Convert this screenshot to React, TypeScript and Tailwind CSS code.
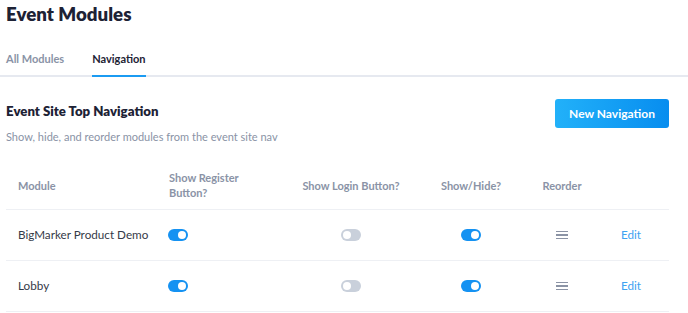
import { useState } from "react";

// Toggle switch
function Toggle({ on }: { on: boolean }) {
  return (
    <span
      className={`relative inline-flex h-3 w-5 items-center rounded-full ${
        on ? "bg-[#1592f2]" : "bg-[#c9d0db]"
      }`}
    >
      <span
        className={`absolute h-2 w-2 rounded-full bg-white ${
          on ? "right-0.5" : "left-0.5"
        }`}
      />
    </span>
  );
}

// Drag handle
function Handle() {
  return (
    <span className="flex w-3 flex-col gap-[2px]">
      <span className="h-[1.5px] bg-[#8b93a5]" />
      <span className="h-[1.5px] bg-[#8b93a5]" />
      <span className="h-[1.5px] bg-[#8b93a5]" />
    </span>
  );
}

const rows = [
  { name: "BigMarker Product Demo", register: true, login: false, show: true },
  { name: "Lobby", register: true, login: false, show: true },
];

const cols = "grid grid-cols-[151px_134px_120px_120px_62px_76px]";

export default function App() {
  const [tab] = useState("Navigation");

  return (
    <div className="h-[313px] w-[688px] overflow-hidden bg-white font-['Lato',sans-serif]">
      {/* Title */}
      <h1 className="pl-1.5 pt-px text-[18.7px] font-extrabold leading-[26px] text-[#1d2235]">
        Event Modules
      </h1>

      {/* Tabs */}
      <div className="mt-[24px] flex gap-7 border-b-2 border-[#e6e9f0] pl-1.5">
        {["All Modules", "Navigation"].map((t) => (
          <div
            key={t}
            className={`-mb-[2px] pb-[8px] text-[11px] font-bold leading-4 ${
              tab === t
                ? "border-b-2 border-[#1b9bf2] text-[#1d2235]"
                : "border-b-2 border-transparent text-[#8a93a6]"
            }`}
          >
            {t}
          </div>
        ))}
      </div>

      {/* Section header */}
      <div className="mt-[22px] flex items-start justify-between pl-1.5 pr-[19px]">
        <div>
          <h2 className="pt-[2px] text-[13.2px] font-extrabold leading-5 text-[#1d2235]">
            Event Site Top Navigation
          </h2>
          <p className="mt-[8px] text-[11px] leading-4 text-[#8a93a6]">
            Show, hide, and reorder modules from the event site nav
          </p>
        </div>
        <button className="h-[29px] w-[114px] rounded-[3px] bg-gradient-to-r from-[#22b1f9] to-[#078def] text-[12px] font-bold text-white">
          New Navigation
        </button>
      </div>

      {/* Table */}
      <div className="ml-1.5 mt-[16px] w-[663px]">
        <div
          className={`${cols} h-[49px] items-center border-b border-[#eef0f4] text-[11px] font-bold leading-[15px] text-[#8a93a6]`}
        >
          <div className="pl-3">Module</div>
          <div className="max-w-[90px] pl-3">Show Register Button?</div>
          <div className="text-center">Show Login Button?</div>
          <div className="text-center">Show/Hide?</div>
          <div className="text-center">Reorder</div>
          <div />
        </div>
        {rows.map((r) => (
          <div
            key={r.name}
            className={`${cols} h-[51px] items-center border-b border-[#eef0f4] text-[11.7px] text-[#353a48]`}
          >
            <div className="pl-3">{r.name}</div>
            <div className="flex pl-[11px]">
              <Toggle on={r.register} />
            </div>
            <div className="flex justify-center">
              <Toggle on={r.login} />
            </div>
            <div className="flex justify-center">
              <Toggle on={r.show} />
            </div>
            <div className="flex justify-center">
              <Handle />
            </div>
            <div className="text-center text-[#3ea2f1]">Edit</div>
          </div>
        ))}
      </div>
    </div>
  );
}
